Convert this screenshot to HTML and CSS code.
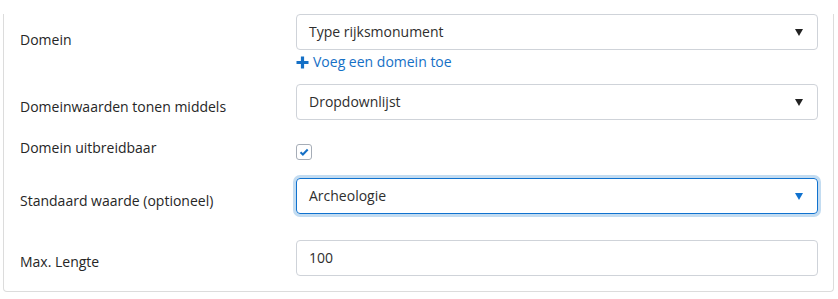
FILE: index.html
```html
<!DOCTYPE html>
<html lang="nl">
<head>
    <meta charset="UTF-8">
    <title>Domein instellingen</title>
    <link rel="stylesheet" href="styles.css">
</head>
<body>
    <div class="panel">
        <div class="form-row row-domain">
            <label class="form-label">Domein</label>
            <div class="form-field">
                <div class="select">
                    <span>Type rijksmonument</span>
                    <span class="caret"></span>
                </div>
                <a class="add-link" href="#">
                    <svg class="plus" width="13" height="13" viewBox="0 0 13 13"><path d="M6.5 0.5v12M0.5 6.5h12" stroke="#1570c6" stroke-width="3.2"/></svg>Voeg een domein toe
                </a>
            </div>
        </div>

        <div class="form-row row-display">
            <label class="form-label">Domeinwaarden tonen middels</label>
            <div class="form-field">
                <div class="select">
                    <span>Dropdownlijst</span>
                    <span class="caret"></span>
                </div>
            </div>
        </div>

        <div class="form-row row-extend">
            <label class="form-label">Domein uitbreidbaar</label>
            <div class="form-field">
                <span class="checkbox">
                    <svg width="10" height="8" viewBox="0 0 10 8"><path d="M1.5 4.2l2.4 2.3 4.8-5" fill="none" stroke="#1570c6" stroke-width="2"/></svg>
                </span>
            </div>
        </div>

        <div class="form-row row-default">
            <label class="form-label">Standaard waarde (optioneel)</label>
            <div class="form-field">
                <div class="select focused">
                    <span>Archeologie</span>
                    <span class="caret"></span>
                </div>
            </div>
        </div>

        <div class="form-row row-length">
            <label class="form-label">Max. Lengte</label>
            <div class="form-field">
                <div class="input">100</div>
            </div>
        </div>
    </div>
</body>
</html>
```

FILE: styles.css
```css
body {
    margin: 0;
    font-family: "Open Sans", "Liberation Sans", sans-serif;
    font-size: 14px;
    line-height: 20px;
    color: #333;
    background: #fff;
}
.panel {
    margin: 0 4px 0 3px;
    padding: 0 15px 15px 16px;
    border: 1px solid #dcdcdc;
    border-top: none;
    border-radius: 0 0 4px 4px;
}
.form-row {
    display: grid;
    grid-template-columns: 276px 1fr;
}
.form-label {
    color: #262626;
}
.select,
.input {
    height: 36px;
    box-sizing: border-box;
    border: 1px solid #cfd3d9;
    border-radius: 4px;
    padding: 0 14px 0 12px;
    display: flex;
    align-items: center;
    justify-content: space-between;
    color: #2e2e2e;
}
.caret {
    width: 0;
    height: 0;
    border-left: 4px solid transparent;
    border-right: 4px solid transparent;
    border-top: 7px solid #222;
}
.select.focused {
    border-color: #1072cf;
    box-shadow: 0 0 0 3px #c3dcf1;
}
.select.focused .caret {
    border-top-color: #1072cf;
}
.add-link {
    display: flex;
    align-items: center;
    gap: 4px;
    margin-top: 2px;
    color: #1570c6;
    text-decoration: none;
}
.checkbox {
    display: flex;
    align-items: center;
    justify-content: center;
    width: 16px;
    height: 16px;
    box-sizing: border-box;
    border: 1px solid #a6adb7;
    border-radius: 3px;
    margin-top: 6px;
}
.row-domain { margin-top: 14px; }
.row-domain .form-label { padding-top: 16px; }
.row-display { margin-top: 12px; }
.row-display .form-label { padding-top: 13px; }
.row-extend { margin-top: 18px; }
.row-default { margin-top: 18px; }
.row-default .form-label { padding-top: 13px; }
.row-length { margin-top: 26px; }
.row-length .form-label { padding-top: 12px; }
```
